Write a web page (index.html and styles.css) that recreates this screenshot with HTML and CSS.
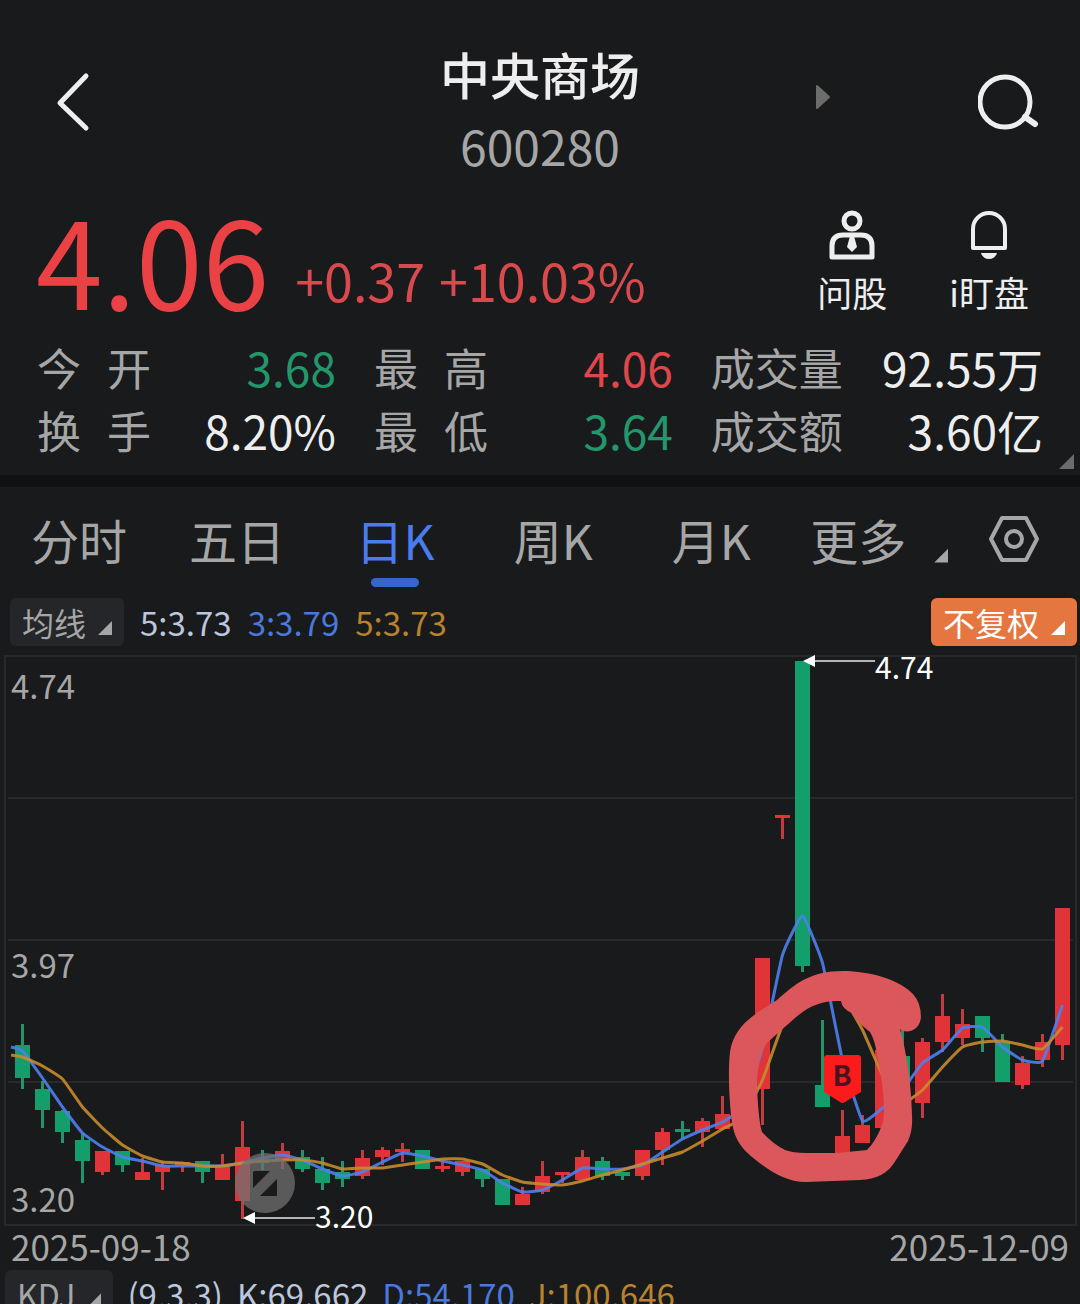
FILE: index.html
```html
<!DOCTYPE html>
<html lang="zh-CN">
<head>
  <meta charset="UTF-8">
  <meta name="viewport" content="width=device-width, initial-scale=1.0">
  <title>中央商场 600280</title>
  <link rel="stylesheet" href="styles.css">
</head>
<body>
  <div class="app">
    <header class="header">
      <button class="icon-btn back" aria-label="返回">
        <svg width="34" height="60" viewBox="0 0 34 60"><path d="M30 4 L4 31 L30 56" fill="none" stroke="#eee" stroke-width="5" stroke-linecap="round" stroke-linejoin="round"/></svg>
      </button>
      <div class="title">
        <h1>中央商场</h1>
        <p>600280</p>
      </div>
      <div class="header-right">
        <button class="icon-btn next" aria-label="下一只">
          <svg width="16" height="26" viewBox="0 0 16 26"><path d="M2 2 L14 13 L2 24 Z" fill="#6c6c6c" stroke="#6c6c6c" stroke-width="2" stroke-linejoin="round"/></svg>
        </button>
        <button class="icon-btn" aria-label="搜索">
          <svg width="62" height="58" viewBox="0 0 62 58"><circle cx="27" cy="29" r="25" fill="none" stroke="#eee" stroke-width="5"/><path d="M47 44 L57 51" stroke="#eee" stroke-width="6" stroke-linecap="round"/></svg>
        </button>
      </div>
    </header>

    <section class="quote">
      <div class="price">
        <strong>4.06</strong>
        <span>+0.37</span>
        <span>+10.03%</span>
      </div>
      <div class="actions">
        <button class="action">
          <svg width="48" height="50" viewBox="0 0 48 50">
            <circle cx="24" cy="11" r="8" fill="none" stroke="#eee" stroke-width="5"/>
            <path d="M4 47 V36 Q4 25 15 25 H33 Q44 25 44 36 V47 Z" fill="none" stroke="#eee" stroke-width="5" stroke-linejoin="round"/>
            <path d="M22 26 H26 L29 37 L24 42 L19 37 Z" fill="#eee"/>
          </svg>
          问股
        </button>
        <button class="action">
          <svg width="48" height="50" viewBox="0 0 48 50">
            <path d="M8 38 V19 A16 16 0 0 1 40 19 V38 Z" fill="none" stroke="#eee" stroke-width="4" stroke-linejoin="round"/>
            <path d="M16 43 H32 Q30 49 24 49 Q18 49 16 43 Z" fill="#eee"/>
          </svg>
          i盯盘
        </button>
      </div>
    </section>

    <dl class="stats">
      <div><dt><span>今</span><span>开</span></dt><dd class="green">3.68</dd></div>
      <div><dt><span>最</span><span>高</span></dt><dd class="red">4.06</dd></div>
      <div><dt>成交量</dt><dd>92.55万</dd></div>
      <div><dt><span>换</span><span>手</span></dt><dd>8.20%</dd></div>
      <div><dt><span>最</span><span>低</span></dt><dd class="green">3.64</dd></div>
      <div><dt>成交额</dt><dd>3.60亿</dd></div>
    </dl>
    <div class="more-row"><i class="corner dim"></i></div>

    <nav class="tabs">
      <button>分时</button>
      <button>五日</button>
      <button class="active">日K</button>
      <button>周K</button>
      <button>月K</button>
      <button class="more">更多<i class="corner"></i></button>
      <button class="setting" aria-label="设置">
        <svg width="52" height="48" viewBox="0 0 52 48"><path d="M14 3 H38 L49 24 L38 45 H14 L3 24 Z" fill="none" stroke="#a6a6a6" stroke-width="4" stroke-linejoin="round"/><circle cx="26" cy="24" r="8" fill="none" stroke="#a6a6a6" stroke-width="4"/></svg>
      </button>
    </nav>

    <div class="legend">
      <button class="chip">均线<i class="corner"></i></button>
      <span class="pale">5:3.73</span>
      <span class="blue">3:3.79</span>
      <span class="gold">5:3.73</span>
      <button class="chip orange">不复权<i class="corner"></i></button>
    </div>

    <div class="chart">
      <svg class="kline" viewBox="0 652 1080 576" role="img" aria-label="日K线图">
        <g class="grid">
          <rect x="5" y="656" width="1071" height="569"/>
          <path d="M8 798 H1073 M8 940 H1073 M8 1082 H1073"/>
        </g>
        <g id="candles"></g>
        <g class="axis">
          <text x="11" y="699">4.74</text>
          <text x="11" y="978">3.97</text>
          <text x="11" y="1212">3.20</text>
        </g>
        <path id="ma-blue" class="ma ma-blue"/>
        <path id="ma-gold" class="ma ma-gold"/>
        <g class="peak">
          <path d="M814 661 H875 M255 1218 H315"/>
          <polygon points="803,661 815,655 815,667"/>
          <polygon points="243,1218 255,1212 255,1224"/>
          <text x="875" y="679">4.74</text>
          <text x="315" y="1228">3.20</text>
        </g>
        <!-- hand-drawn ring round the buy point -->
        <path class="ring" fill-rule="evenodd" d="M921 1017 C920 1028 912 1033 903 1031 L900 1029 C906 1050 911 1080 912 1115 Q913 1130 908 1141 L896 1160 C888 1174 876 1179 860 1180 L806 1182 C785 1182 768 1170 752 1157 C738 1145 733 1135 731 1115 C729 1095 728 1070 730 1052 C734 1025 755 1014 777 1000 C795 984 810 971 843 971 C870 971 900 980 913 994 Q921 1003 921 1017 Z
          M841 1001 C820 1000 806 1008 795 1018 L769 1041 C760 1049 757 1070 757 1087 C758 1105 759 1122 762 1132 Q773 1144 785 1150 Q793 1153 806 1153 L837 1153 L867 1150 Q877 1140 883 1122 C886 1105 882 1080 877 1055 Q875 1040 870 1032 Q859 1024 852 1013 Q842 1009 841 1001 Z"/>
        <g class="buy">
          <path d="M827 1055 H858 Q861 1055 861 1058 V1092 L845 1102 Q842 1104 840 1102 L824 1092 V1058 Q824 1055 827 1055 Z"/>
          <text x="842" y="1086">B</text>
        </g>
      </svg>
      <button class="expand" aria-label="全屏">
        <svg viewBox="0 0 60 60"><path d="M19 18 H35 L18 35 V19 Z M42 26 V43 H25 Z" fill="#181a1b"/></svg>
      </button>
    </div>

    <div class="dates"><time>2025-09-18</time><time>2025-12-09</time></div>

    <div class="legend kdj">
      <button class="chip">KDJ<i class="corner"></i></button>
      <span class="pale">(9,3,3)</span>
      <span class="pale">K:69.662</span>
      <span class="blue">D:54.170</span>
      <span class="gold">J:100.646</span>
    </div>
  </div>
  <script src="chart.js"></script>
</body>
</html>
```
FILE: styles.css
```css
* {
  box-sizing: border-box;
}

body {
  margin: 0;
  background-color: #181a1b;
  color: #eee;
  font-family: "Noto Sans CJK SC", "Noto Sans", sans-serif;
}

h1, p, dl, dd {
  margin: 0;
}

button {
  padding: 0;
  border: none;
  background: none;
  color: inherit;
  font-family: inherit;
  cursor: pointer;
}

svg {
  display: block;
}

.app {
  height: 100vh;
  overflow: hidden;
}

.red { color: #e0474b; }
.green { color: #23976b; }
.pale { color: #bcc6dc; }
.blue { color: #4a78dc; }
.gold { color: #b9822e; }

/* header */
.header {
  display: grid;
  grid-template-columns: 1fr auto 1fr;
  align-items: center;
  height: 192px;
  padding: 12px 40px 0;
}

.back {
  justify-self: start;
  margin-left: 16px;
}

.title {
  padding-top: 14px;
  text-align: center;
}

.title h1 {
  font-size: 50px;
  font-weight: 500;
  line-height: 72px;
}

.title p {
  color: #a6a6a6;
  font-size: 48px;
  line-height: 72px;
}

.header-right {
  display: flex;
  justify-content: flex-end;
  align-items: center;
  gap: 147px;
}

.next {
  margin-bottom: 10px;
}

/* quote */
.quote {
  display: flex;
  justify-content: space-between;
  height: 144px;
  padding: 6px 51px 0 36px;
}

.price {
  display: flex;
  align-self: flex-start;
  align-items: flex-end;
  gap: 14px;
  color: #d94a4e;
  font-size: 52px;
  line-height: 76px;
}

.price strong {
  margin-right: 12px;
  color: #ea4145;
  font-size: 120px;
  font-weight: 400;
  line-height: 120px;
}

.actions {
  display: flex;
  align-items: flex-start;
  gap: 62px;
  padding-top: 12px;
}

.action {
  display: flex;
  flex-direction: column;
  align-items: center;
  gap: 8px;
  font-size: 35px;
  line-height: 48px;
}

/* stats */
.stats {
  display: grid;
  grid-template-columns: 9fr 9fr 10fr;
  column-gap: 38px;
  padding: 0 37px;
}

.stats div {
  display: flex;
  justify-content: space-between;
  line-height: 63px;
}

.stats dt {
  display: flex;
  gap: 26px;
  color: #a6a6a6;
  font-size: 44px;
}

.stats dd {
  font-size: 46px;
}

.corner {
  display: inline-block;
  width: 14px;
  height: 14px;
  background-color: currentColor;
  clip-path: polygon(100% 0, 100% 100%, 0 100%);
}

.more-row {
  display: flex;
  justify-content: flex-end;
  height: 21px;
  margin-top: -8px;
  padding-right: 6px;
}

.corner.dim {
  width: 15px;
  height: 15px;
  color: #6c6c6c;
}

/* tabs */
.tabs {
  display: grid;
  grid-template-columns: repeat(6, 6fr) 5fr;
  align-items: center;
  justify-items: center;
  height: 123px;
  padding-bottom: 8px;
  border-top: 12px solid #101113;
  color: #a6a6a6;
  font-size: 48px;
  line-height: 72px;
}

.tabs button {
  font-size: inherit;
  line-height: inherit;
}

.tabs .active {
  position: relative;
  color: #4a7cf0;
}

.tabs .active::after {
  content: "";
  position: absolute;
  left: 50%;
  bottom: -12px;
  width: 48px;
  height: 9px;
  margin-left: -24px;
  border-radius: 5px;
  background-color: #3367cc;
}

.tabs .more {
  display: flex;
  align-items: flex-end;
  justify-self: end;
  gap: 28px;
}

.more .corner {
  margin-bottom: 12px;
}

/* indicator rows */
.legend {
  display: flex;
  align-items: center;
  gap: 16px;
  padding: 0 3px 0 10px;
  font-size: 33px;
  line-height: 48px;
}

.chip {
  display: flex;
  align-items: center;
  gap: 12px;
  height: 48px;
  padding: 0 12px;
  border-radius: 6px;
  background-color: #252629;
  color: #a6a6a6;
  font-size: 32px;
}

.chip .corner {
  margin-top: 12px;
}

.orange {
  margin-left: auto;
  background-color: #e6763f;
  color: #fff;
}

/* chart */
.chart {
  position: relative;
  margin-top: 6px;
}

.kline {
  width: 100%;
}

.grid {
  fill: none;
  stroke: #28292b;
  stroke-width: 2;
}

.axis {
  fill: #a6a6a6;
  font-size: 33px;
}

.up { fill: #e03438; }
.down { fill: #149e6b; }
.up .wick { fill: #c03c40; }
.down .wick { fill: #25936a; }

.ma {
  fill: none;
  stroke-width: 3;
  stroke-linejoin: round;
  opacity: 0.9;
}

.ma-blue { stroke: #4d7fee; }
.ma-gold { stroke: #c78b2c; }

.peak {
  fill: #fff;
  font-size: 30px;
}

.peak path {
  stroke: #b4b4b4;
  stroke-width: 2;
}

.ring {
  fill: #dc575b;
}

.buy {
  fill: #fb1b1b;
}

.buy text {
  fill: #4c1220;
  font-size: 28px;
  font-weight: 700;
  text-anchor: middle;
}

.expand {
  position: absolute;
  left: 21.8%;
  bottom: 2.6%;
  width: 60px;
  height: 60px;
  border-radius: 50%;
  background-color: rgba(112, 112, 112, 0.75);
}

.dates {
  display: flex;
  justify-content: space-between;
  padding: 0 11px 6px;
  color: #a6a6a6;
  font-size: 35px;
  line-height: 36px;
}

.kdj {
  gap: 14px;
  padding-left: 5px;
}
```
FILE: chart.js
```js
// [direction, wick top, body top, body bottom, wick bottom]
const candles = [
  ['down', 1024, 1045, 1078, 1089],
  ['down', 1081, 1089, 1110, 1128],
  ['down', 1110, 1111, 1132, 1143],
  ['down', 1133, 1140, 1161, 1183],
  ['up', 1151, 1151, 1172, 1175],
  ['down', 1151, 1151, 1165, 1172],
  ['up', 1158, 1172, 1180, 1180],
  ['up', 1162, 1165, 1172, 1190],
  ['up', 1162, 1162, 1166, 1172],
  ['down', 1161, 1161, 1172, 1183],
  ['up', 1154, 1165, 1180, 1180],
  ['up', 1121, 1147, 1201, 1219],
  ['down', 1150, 1160, 1163, 1170],
  ['up', 1143, 1151, 1160, 1169],
  ['down', 1150, 1157, 1169, 1172],
  ['down', 1157, 1169, 1183, 1190],
  ['down', 1161, 1172, 1179, 1187],
  ['up', 1150, 1158, 1176, 1179],
  ['up', 1147, 1150, 1157, 1165],
  ['up', 1143, 1149, 1152, 1162],
  ['down', 1150, 1150, 1169, 1169],
  ['up', 1161, 1166, 1169, 1172],
  ['up', 1161, 1161, 1172, 1176],
  ['down', 1169, 1169, 1179, 1187],
  ['down', 1179, 1179, 1205, 1205],
  ['up', 1187, 1194, 1205, 1205],
  ['up', 1161, 1176, 1192, 1194],
  ['up', 1172, 1172, 1175, 1183],
  ['up', 1150, 1157, 1180, 1180],
  ['down', 1157, 1161, 1176, 1180],
  ['down', 1172, 1172, 1176, 1180],
  ['up', 1150, 1150, 1176, 1180],
  ['up', 1128, 1132, 1150, 1165],
  ['down', 1121, 1129, 1132, 1139],
  ['up', 1118, 1121, 1132, 1147],
  ['up', 1096, 1114, 1129, 1129],
  ['up', 1100, 1100, 1118, 1118],
  ['up', 958, 958, 1089, 1125],
  ['up', 815, 815, 818, 839],
  ['down', 661, 661, 966, 972],
  ['down', 1020, 1085, 1107, 1107],
  ['up', 1110, 1136, 1156, 1156],
  ['up', 1115, 1125, 1143, 1143],
  ['up', 1050, 1050, 1128, 1128],
  ['down', 1020, 1056, 1090, 1090],
  ['up', 1038, 1042, 1103, 1118],
  ['up', 994, 1016, 1042, 1052],
  ['up', 1009, 1024, 1038, 1045],
  ['down', 1016, 1016, 1038, 1052],
  ['down', 1034, 1042, 1082, 1082],
  ['up', 1056, 1063, 1085, 1089],
  ['up', 1034, 1042, 1060, 1067],
  ['up', 908, 908, 1045, 1060]
];

const blue = [1051, 1078, 1107, 1133, 1147, 1157, 1161, 1166, 1166, 1166, 1166, 1163, 1158, 1155,
  1160, 1169, 1176, 1172, 1162, 1153, 1156, 1161, 1165, 1170, 1183, 1192, 1190, 1180, 1168, 1169,
  1169, 1165, 1152, 1139, 1130, 1122, 1107, 1048, 955, 916, 963, 1060, 1121, 1108, 1090, 1063,
  1050, 1028, 1027, 1047, 1060, 1061, 1005];

const gold = [1057, 1066, 1079, 1107, 1128, 1145, 1156, 1162, 1163, 1166, 1166, 1163, 1161, 1160,
  1160, 1163, 1169, 1168, 1168, 1165, 1162, 1159, 1159, 1164, 1175, 1182, 1184, 1185, 1181, 1175,
  1170, 1164, 1158, 1152, 1141, 1129, 1118, 1080, 1025, 995, 985, 996, 1030, 1075, 1103, 1090,
  1067, 1047, 1042, 1041, 1045, 1049, 1027];

const step = 20;
const bodyWidth = 15;
const firstX = 15;

document.getElementById('candles').innerHTML = candles.map(([dir, high, top, bottom, low], i) => {
  const x = firstX + i * step;
  return `<g class="${dir}">
    <rect class="wick" x="${x + 6}" y="${high}" width="3" height="${low - high}"/>
    <rect x="${x}" y="${top}" width="${bodyWidth}" height="${bottom - top}"/>
  </g>`;
}).join('');

// lightly rounded line through every point
const linePath = (values, startY) => {
  const pts = values.map((y, i) => [firstX + bodyWidth / 2 + i * step, y]);
  pts.unshift([11, startY]);
  let d = `M${pts[0]}`;
  for (let i = 1; i < pts.length; i++) {
    const a = pts[i - 1];
    const b = pts[i];
    const before = pts[i - 2] || a;
    const after = pts[i + 1] || b;
    const c1 = [a[0] + (b[0] - before[0]) / 16, a[1] + (b[1] - before[1]) / 16];
    const c2 = [b[0] - (after[0] - a[0]) / 16, b[1] - (after[1] - a[1]) / 16];
    d += ` C${c1} ${c2} ${b}`;
  }
  return d;
};

document.getElementById('ma-blue').setAttribute('d', linePath(blue, 1047));
document.getElementById('ma-gold').setAttribute('d', linePath(gold, 1055));
```
